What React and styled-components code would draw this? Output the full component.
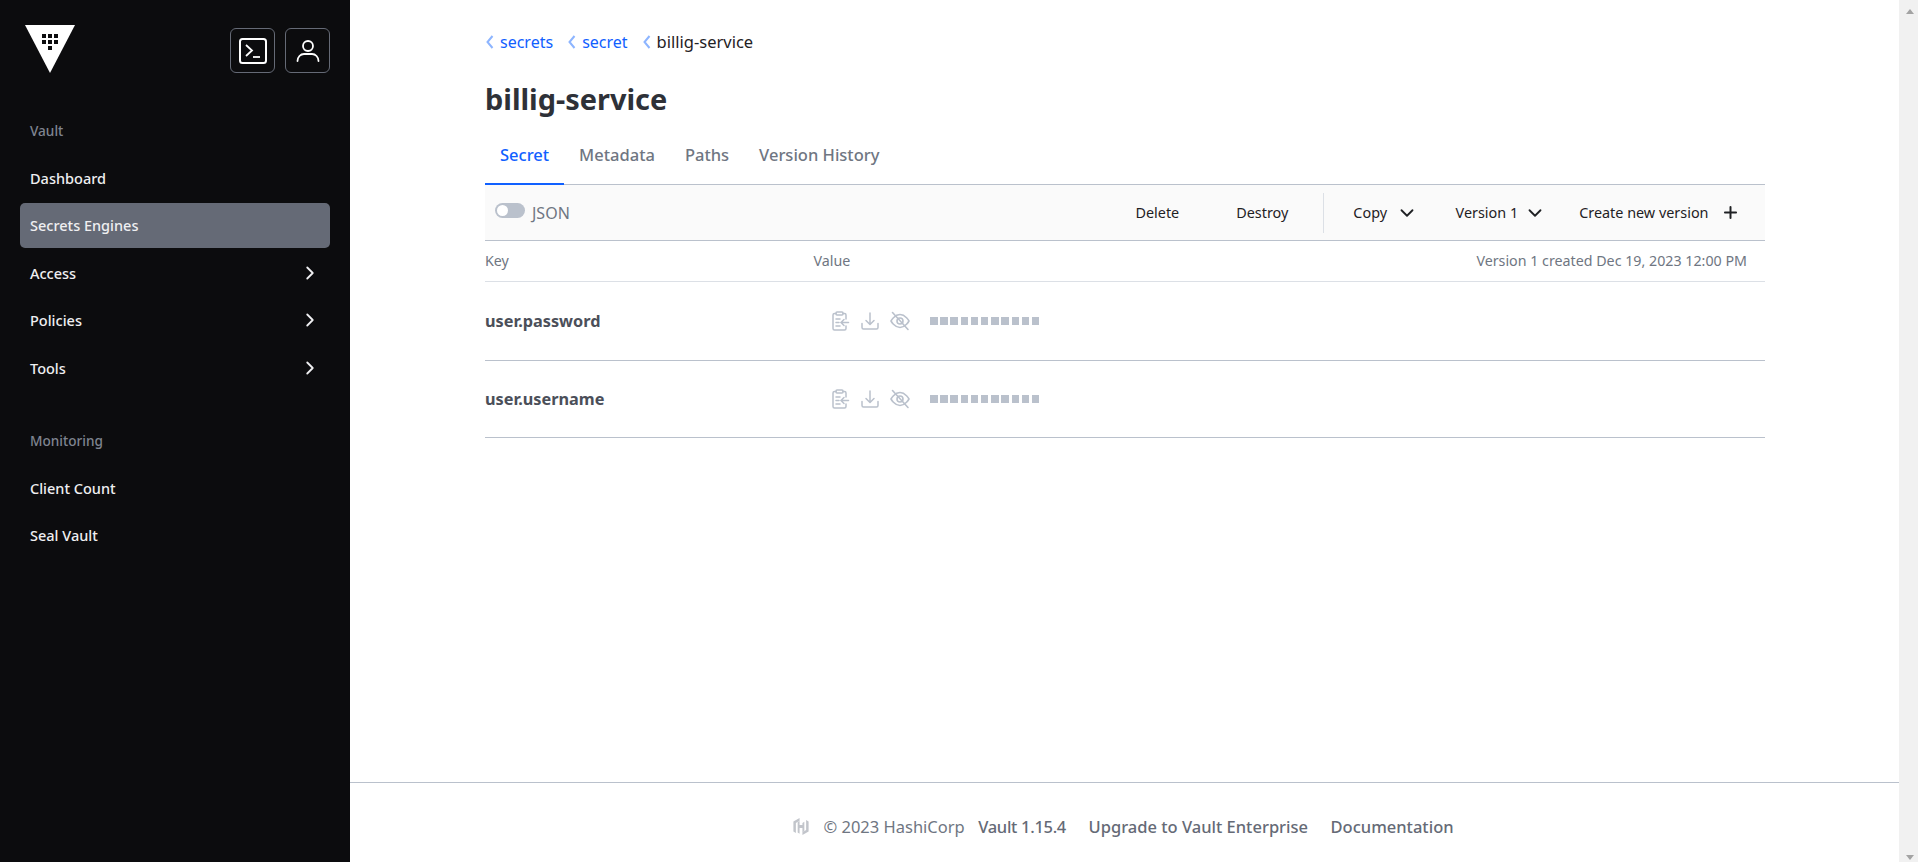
import React from 'react';
import styled, { createGlobalStyle } from 'styled-components';
import { ChevronRight, ChevronDown, Plus } from 'lucide-react';

const GlobalStyle = createGlobalStyle`
  html, body {
    margin: 0;
    padding: 0;
    height: 100%;
    overflow: hidden;
  }
  body {
    font-family: "Noto Sans", "Open Sans", sans-serif;
    background: #fff;
  }
  * {
    box-sizing: border-box;
  }
`;

const Page = styled.div`
  display: flex;
  height: 862px;
`;

const Sidebar = styled.nav`
  width: 350px;
  flex: none;
  background: #0c0c0e;
  padding: 25px 20px 0 20px;
  display: flex;
  flex-direction: column;
`;

const SideTop = styled.div`
  display: flex;
  justify-content: space-between;
  padding-left: 5px;
  height: 93px;
`;

const TopButtons = styled.div`
  display: flex;
  gap: 10px;
  padding-top: 3px;
`;

const IconButton = styled.div`
  width: 45px;
  height: 45px;
  border: 1px solid #656a76;
  border-radius: 6px;
  display: flex;
  align-items: center;
  justify-content: center;
  color: #fff;
`;

const SectionLabel = styled.div`
  font-size: 13.6px;
  font-weight: 500;
  color: #7f8490;
  padding-left: 10px;
  height: 25px;
  line-height: 25px;
  margin-top: ${(props) => props.$top || 0}px;
  margin-bottom: 12px;
`;

const NavItem = styled.div`
  height: 45px;
  margin-bottom: 2.5px;
  padding: 0 9px 0 10px;
  border-radius: 5px;
  display: flex;
  align-items: center;
  justify-content: space-between;
  font-size: 14.5px;
  font-weight: 500;
  color: #efeff1;
  background: ${(props) => (props.$active ? '#656a76' : 'transparent')};
`;

const Main = styled.main`
  flex: 1;
  min-width: 0;
  display: flex;
  flex-direction: column;
`;

const Content = styled.div`
  flex: 1;
  padding: 29px 0 0 135px;
  width: 1415px;
`;

const Crumbs = styled.div`
  display: flex;
  align-items: center;
  height: 26px;
  line-height: 26px;
`;

const Crumb = styled.span`
  display: flex;
  align-items: center;
  gap: 6px;
  margin-right: 14px;
  font-size: ${(props) => (props.$current ? '16.5px' : '16px')};
  color: ${(props) => (props.$current ? '#1f2124' : '#1060ff')};
`;

const Title = styled.h1`
  margin: 24px 0 0;
  font-size: 28.9px;
  line-height: 40px;
  font-weight: 700;
  color: #2e3138;
`;

const Tabs = styled.div`
  display: flex;
  height: 66px;
  border-bottom: 1px solid #bac1cc;
`;

const Tab = styled.div`
  padding: 5px 15px 0;
  display: flex;
  align-items: center;
  height: 66px;
  font-size: 16.5px;
  font-weight: 500;
  color: ${(props) => (props.$active ? '#1060ff' : '#6f7682')};
  box-shadow: ${(props) => (props.$active ? 'inset 0 -2px 0 #1060ff' : 'none')};
`;

const Toolbar = styled.div`
  height: 56px;
  background: #fafafa;
  border-bottom: 1px solid #bac1cc;
  display: flex;
  align-items: center;
  padding: 0 25.5px 0 10px;
  font-size: 14.4px;
  color: #1f2124;
`;

const Toggle = styled.span`
  width: 30px;
  height: 15px;
  border-radius: 8px;
  background: #bac1cc;
  padding: 2px;
  margin-top: -4px;
  display: flex;
  &::before {
    content: '';
    width: 11px;
    height: 11px;
    background: #fff;
    border-radius: 50%;
  }
`;

const JsonLabel = styled.span`
  margin-left: 7px;
  font-size: 16px;
  color: #6f7682;
  flex: 1;
`;

const ToolButton = styled.span`
  display: flex;
  align-items: center;
  margin-left: ${(props) => props.$left || 0}px;
  gap: ${(props) => props.$gap || 0}px;
`;

const Divider = styled.span`
  width: 1px;
  height: 40px;
  background: #dce0e6;
  margin: 0 29px 0 35px;
`;

const HeaderRow = styled.div`
  height: 41px;
  display: grid;
  grid-template-columns: 328.5px 1fr auto;
  align-items: center;
  padding: 0 18px 2px 0;
  font-size: 14.25px;
  color: #6f7682;
  border-bottom: 1px solid #dce0e6;
`;

const SecretRow = styled.div`
  height: ${(props) => props.$height}px;
  display: grid;
  grid-template-columns: 328px 1fr;
  align-items: center;
  border-bottom: 1px solid #bac1cc;
`;

const KeyName = styled.div`
  font-size: 16.3px;
  font-weight: 700;
  color: #4b4f59;
`;

const ValueCell = styled.div`
  display: flex;
  align-items: center;
  padding-left: 17px;
  color: #bac1cc;
  gap: 10px;
`;

const Masked = styled.span`
  display: flex;
  gap: 2.7px;
  margin-left: 10px;
`;

const Dot = styled.span`
  width: 7.5px;
  height: 7.5px;
  background: #bac1cc;
`;

const Footer = styled.footer`
  height: 80px;
  border-top: 1px solid #bac1cc;
  display: flex;
  align-items: center;
  justify-content: center;
  gap: 22.5px;
  font-size: 16.5px;
  color: #6f7682;
  padding: 8px 3px 0 0;
  margin-top: auto;
`;

const FooterBrand = styled.span`
  display: flex;
  align-items: center;
  gap: 13px;
  margin-right: -9px;
`;

const FooterLink = styled.span`
  font-weight: 500;
  color: #656a76;
  letter-spacing: ${(props) => (props.$tight ? '-0.3px' : 'normal')};
`;

const Scrollbar = styled.div`
  width: 19px;
  flex: none;
  background: #f1f1f1;
  display: flex;
  flex-direction: column;
  justify-content: space-between;
  align-items: center;
  padding: 9px 0 2px 2px;
`;

const Arrow = styled.span`
  width: 0;
  height: 0;
  border-left: 4.5px solid transparent;
  border-right: 4.5px solid transparent;
  ${(props) =>
    props.$down ? 'border-top: 5px solid #a3a3a3;' : 'border-bottom: 5px solid #a3a3a3;'}
`;

function VaultLogo() {
  const dots = [
    [42, 34], [48, 34], [54, 34],
    [42, 40], [48, 40], [54, 40],
    [48, 46],
  ];
  return (
    <svg width="50" height="50" viewBox="25 25 50 50">
      <path d="M25 25H75L50 73Z" fill="#fff" />
      {dots.map(([x, y]) => (
        <rect key={`${x}-${y}`} x={x} y={y} width="4" height="4" fill="#0c0c0e" />
      ))}
    </svg>
  );
}

function TerminalIcon() {
  return (
    <svg width="28" height="26" viewBox="0 0 28 26" fill="none" stroke="#fff" strokeWidth="2">
      <rect x="1" y="1" width="26" height="24" rx="2.5" />
      <path d="M7 7l6 5.5-6 5.5" strokeWidth="1.8" />
      <path d="M14 19h7" strokeWidth="1.8" />
    </svg>
  );
}

function UserIcon() {
  return (
    <svg width="24" height="22" viewBox="0 0 24 22" fill="none" stroke="#fff" strokeWidth="1.8" strokeLinecap="round">
      <circle cx="12" cy="6" r="5" />
      <path d="M1.5 21c0-4 3-7 6.500-7h8c3.500 0 6.500 3 6.500 7" />
    </svg>
  );
}

function CrumbChevron() {
  return (
    <svg width="9" height="16" viewBox="0 0 9 16" fill="none" stroke="#8db5ff" strokeWidth="2">
      <path d="M7.5 2L2.5 8l5 6" />
    </svg>
  );
}

function ClipboardIcon() {
  return (
    <svg width="20" height="20" viewBox="0 0 20 20" fill="none" stroke="currentColor" strokeWidth="1.5" strokeLinecap="round">
      <path d="M6 2.5H4.500A1.500 1.500 0 0 0 3 4v13.500A1.500 1.500 0 0 0 4.500 19h10a1.500 1.500 0 0 0 1.500-1.500V15" />
      <path d="M13 2.5h1.500A1.500 1.500 0 0 1 16 4v4" />
      <rect x="6" y="1" width="7" height="3" rx="1" />
      <path d="M6 8h4M6 11.500h3M6 15h4M18.500 11.500h-7M14 8.500l-3 3 3 3" />
    </svg>
  );
}

function DownloadIcon() {
  return (
    <svg width="20" height="20" viewBox="0 0 20 20" fill="none" stroke="currentColor" strokeWidth="1.5" strokeLinecap="round" strokeLinejoin="round">
      <path d="M2 12.500v4A1.500 1.500 0 0 0 3.500 18h13a1.500 1.500 0 0 0 1.500-1.500v-4" />
      <path d="M10 2v11M6 9.500l4 4 4-4" />
    </svg>
  );
}

function EyeOffIcon() {
  return (
    <svg width="20" height="20" viewBox="0 0 20 20" fill="none" stroke="currentColor" strokeWidth="1.6" strokeLinecap="round" strokeLinejoin="round">
      <path d="M1 10s3.500-6.500 9-6.500S19 10 19 10s-3.500 6.500-9 6.500S1 10 1 10Z" />
      <circle cx="10" cy="10" r="3" />
      <path d="M2.500 1.500l15.500 17" />
    </svg>
  );
}

function HashiIcon() {
  return (
    <svg width="18" height="19" viewBox="0 0 18 20" fill="#c2c5cb">
      <path d="M7.500 1L1 4.700v10.600l2.600 1.500V6.200L7.500 4Z" />
      <path d="M10.500 19l6.500-3.700V4.700l-2.600-1.500v10.600L10.500 16Z" />
      <path d="M7.500 8.500h3V6.300l2-1.200v9.800l-2 1.100v-4.300h-3v5.800l-2-1.100V5.200l2-1.100Z" />
    </svg>
  );
}

function SecretValue() {
  return (
    <ValueCell>
      <ClipboardIcon />
      <DownloadIcon />
      <EyeOffIcon />
      <Masked>
        {Array.from({ length: 11 }).map((_, i) => (
          <Dot key={i} />
        ))}
      </Masked>
    </ValueCell>
  );
}

export default function App() {
  return (
    <Page>
      <GlobalStyle />
      <Sidebar>
        <SideTop>
          <VaultLogo />
          <TopButtons>
            <IconButton>
              <TerminalIcon />
            </IconButton>
            <IconButton>
              <UserIcon />
            </IconButton>
          </TopButtons>
        </SideTop>
        <SectionLabel>Vault</SectionLabel>
        <NavItem>Dashboard</NavItem>
        <NavItem $active>Secrets Engines</NavItem>
        <NavItem>
          Access <ChevronRight size={22} />
        </NavItem>
        <NavItem>
          Policies <ChevronRight size={22} />
        </NavItem>
        <NavItem>
          Tools <ChevronRight size={22} />
        </NavItem>
        <SectionLabel $top={35.5}>Monitoring</SectionLabel>
        <NavItem>Client Count</NavItem>
        <NavItem>Seal Vault</NavItem>
      </Sidebar>
      <Main>
        <Content>
          <Crumbs>
            <Crumb>
              <CrumbChevron />
              secrets
            </Crumb>
            <Crumb>
              <CrumbChevron />
              secret
            </Crumb>
            <Crumb $current>
              <CrumbChevron />
              billig-service
            </Crumb>
          </Crumbs>
          <Title>billig-service</Title>
          <Tabs>
            <Tab $active>Secret</Tab>
            <Tab>Metadata</Tab>
            <Tab>Paths</Tab>
            <Tab>Version History</Tab>
          </Tabs>
          <Toolbar>
            <Toggle />
            <JsonLabel>JSON</JsonLabel>
            <ToolButton>Delete</ToolButton>
            <ToolButton $left={57}>Destroy</ToolButton>
            <Divider />
            <ToolButton $gap={9}>
              Copy <ChevronDown size={22} />
            </ToolButton>
            <ToolButton $left={37.5} $gap={6}>
              Version 1 <ChevronDown size={22} />
            </ToolButton>
            <ToolButton $left={33} $gap={12}>
              Create new version <Plus size={19} strokeWidth={2.5} />
            </ToolButton>
          </Toolbar>
          <HeaderRow>
            <span>Key</span>
            <span>Value</span>
            <span>Version 1 created Dec 19, 2023 12:00 PM</span>
          </HeaderRow>
          <SecretRow $height={79}>
            <KeyName>user.password</KeyName>
            <SecretValue />
          </SecretRow>
          <SecretRow $height={77}>
            <KeyName>user.username</KeyName>
            <SecretValue />
          </SecretRow>
        </Content>
        <Footer>
          <FooterBrand>
            <HashiIcon />
            © 2023 HashiCorp
          </FooterBrand>
          <FooterLink $tight>Vault 1.15.4</FooterLink>
          <FooterLink>Upgrade to Vault Enterprise</FooterLink>
          <FooterLink>Documentation</FooterLink>
        </Footer>
      </Main>
      <Scrollbar>
        <Arrow />
        <Arrow $down />
      </Scrollbar>
    </Page>
  );
}
